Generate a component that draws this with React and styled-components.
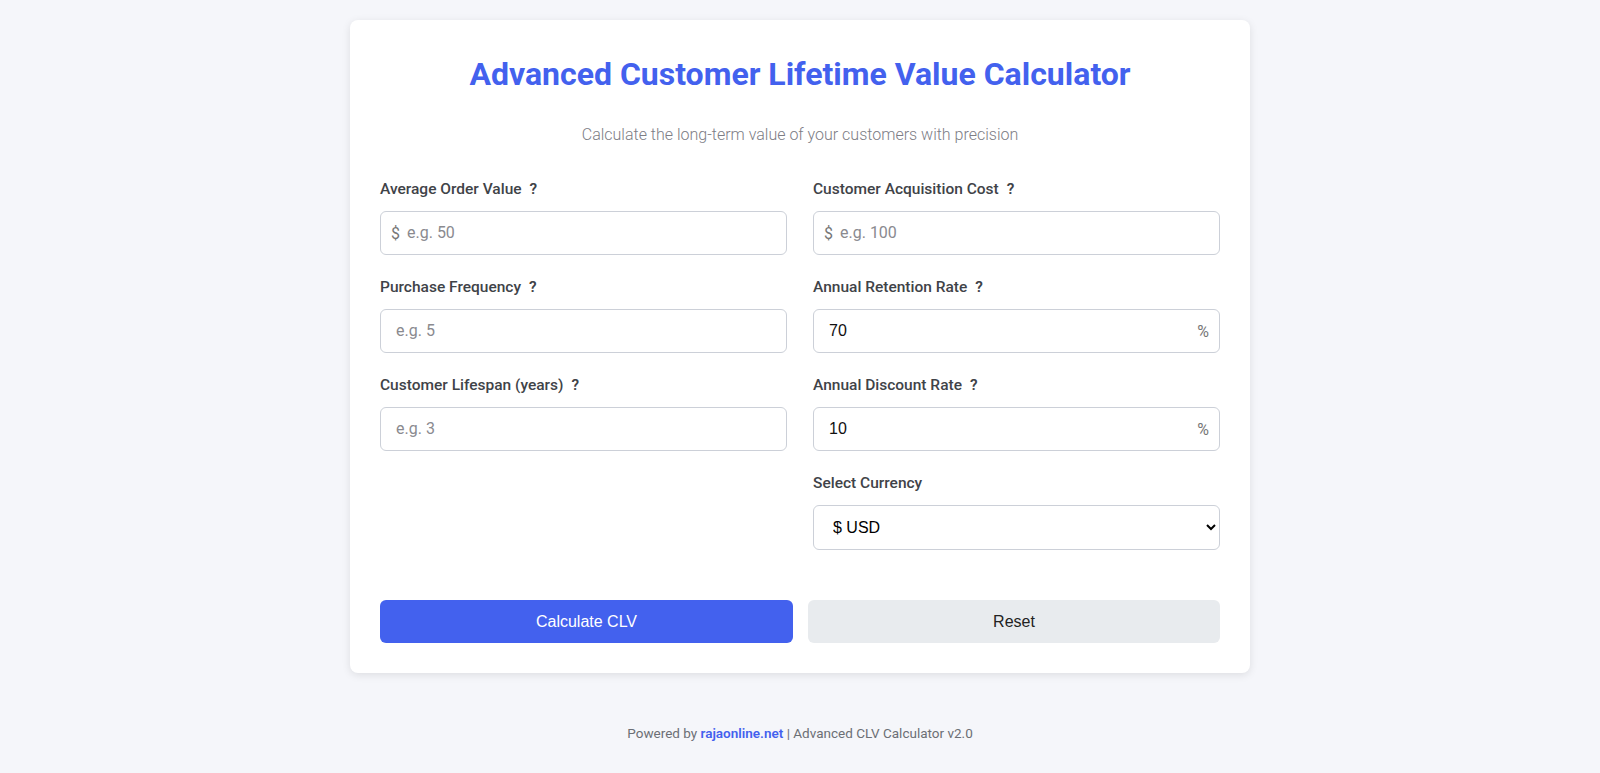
import React from "react";
import styled, { createGlobalStyle } from "styled-components";

const Global = createGlobalStyle`
  html, body { margin: 0; padding: 0; background: #f5f6fa; font-family: Roboto, "Noto Sans", sans-serif; }
`;

const Page = styled.div`
  min-height: 773px;
  padding-top: 20px;
  box-sizing: border-box;
  display: flex;
  flex-direction: column;
  align-items: center;
`;

const Card = styled.div`
  width: 900px;
  box-sizing: border-box;
  background: #fff;
  border-radius: 8px;
  box-shadow: 0 2px 8px rgba(0,0,0,0.1);
  padding: 36px 30px 30px 30px;
`;

const Title = styled.h1`
  margin: 0;
  text-align: center;
  color: #4361ee;
  font-size: 32px;
  font-weight: 700;
  line-height: 36px;
`;

const Subtitle = styled.p`
  margin: 33px 0 0;
  text-align: center;
  color: #7d7d85;
  font-size: 16px;
  font-weight: 300;
  line-height: 20px;
`;

const Grid = styled.div`
  margin-top: 35px;
  display: grid;
  grid-template-columns: 1fr 1fr;
  column-gap: 26px;
  row-gap: 23px;
`;

const Field = styled.div`
  display: flex;
  flex-direction: column;
  gap: 12px;
  grid-column: ${p => p.$col || "auto"};
`;

const Label = styled.label`
  font-size: 15.5px;
  font-weight: 500;
  color: #3f4348;
  line-height: 19px;
`;

const Help = styled.span`
  margin-left: 8px;
  font-weight: 600;
`;

const InputWrap = styled.div`
  display: flex;
  align-items: center;
  height: 44px;
  box-sizing: border-box;
  border: 1px solid #ccd0d8;
  border-radius: 6px;
  padding: 0 10px 0 ${p => (p.$prefix ? "10px" : "15px")};
`;

const Affix = styled.span`
  color: #777;
  font-size: 16px;
  font-family: Roboto, sans-serif;
  margin-right: ${p => (p.$right ? "0" : "7px")};
`;

const Input = styled.input`
  flex: 1;
  border: none;
  outline: none;
  font-size: 16px;
  font-family: "Liberation Sans", Arial, sans-serif;
  color: #111;
  background: transparent;
  padding: 0;
  &::placeholder { color: #8a8a8f; font-family: Roboto, sans-serif; }
`;

const Select = styled.select`
  height: 45px;
  border: 1px solid #ccd0d8;
  border-radius: 6px;
  padding: 0 15px;
  font-size: 16px;
  font-family: "Liberation Sans", Arial, sans-serif;
  color: #000;
  background: #fff;
`;

const Buttons = styled.div`
  margin-top: 50px;
  display: grid;
  grid-template-columns: 413px 1fr;
  gap: 15px;
`;

const Button = styled.button`
  height: 43px;
  border: none;
  border-radius: 6px;
  font-size: 16px;
  font-family: "Liberation Sans", Arial, sans-serif;
  background: ${p => (p.$primary ? "#4361ee" : "#e8ebee")};
  color: ${p => (p.$primary ? "#fff" : "#222")};
`;

const Footer = styled.div`
  margin-top: 52px;
  font-size: 13.5px;
  color: #6c6f75;
  a { color: #4361ee; font-weight: 600; text-decoration: none; }
`;

const fields = [
  { label: "Average Order Value", ph: "e.g. 50", prefix: "$" },
  { label: "Customer Acquisition Cost", ph: "e.g. 100", prefix: "$" },
  { label: "Purchase Frequency", ph: "e.g. 5" },
  { label: "Annual Retention Rate", val: "70", suffix: "%" },
  { label: "Customer Lifespan (years)", ph: "e.g. 3" },
  { label: "Annual Discount Rate", val: "10", suffix: "%" },
];

export default function App() {
  return (
    <>
      <Global />
      <Page>
        <Card>
          <Title>Advanced Customer Lifetime Value Calculator</Title>
          <Subtitle>Calculate the long-term value of your customers with precision</Subtitle>
          <Grid>
            {fields.map(f => (
              <Field key={f.label}>
                <Label>{f.label}<Help>?</Help></Label>
                <InputWrap $prefix={!!f.prefix}>
                  {f.prefix && <Affix>{f.prefix}</Affix>}
                  <Input placeholder={f.ph} defaultValue={f.val} />
                  {f.suffix && <Affix $right>{f.suffix}</Affix>}
                </InputWrap>
              </Field>
            ))}
            <Field $col="2">
              <Label>Select Currency</Label>
              <Select defaultValue="usd">
                <option value="usd">$ USD</option>
                <option value="eur">€ EUR</option>
              </Select>
            </Field>
          </Grid>
          <Buttons>
            <Button $primary>Calculate CLV</Button>
            <Button>Reset</Button>
          </Buttons>
        </Card>
        <Footer>Powered by <a href="#">rajaonline.net</a> | Advanced CLV Calculator v2.0</Footer>
      </Page>
    </>
  );
}
